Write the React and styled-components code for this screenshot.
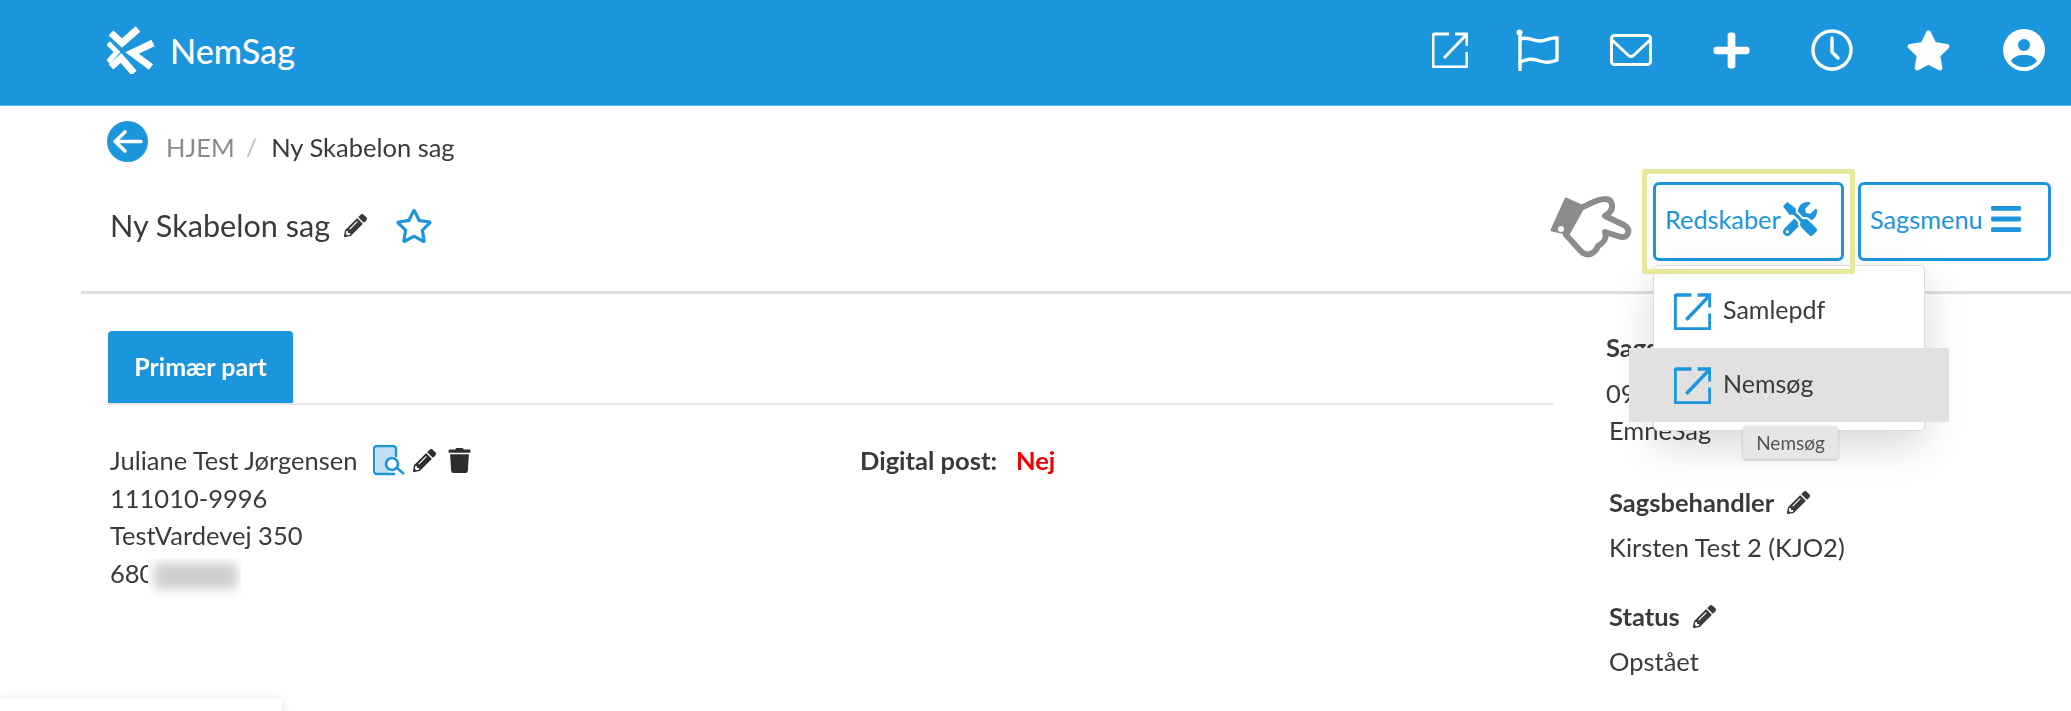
import React from 'react'
import styled, { createGlobalStyle } from 'styled-components'
import { FaPencilAlt, FaTrash, FaStar, FaRegStar, FaTools, FaBars, FaPlus } from 'react-icons/fa'

const BLUE = '#1b96dd'
const TEXT = '#3a3a3a'

const Global = createGlobalStyle`
  html, body { margin: 0; padding: 0; background: #fff; }
  body { font-family: Lato, "Noto Sans", sans-serif; color: ${TEXT}; overflow: hidden; }
`

const Page = styled.div`
  position: relative;
  width: 2071px;
  height: 711px;
  overflow: hidden;
  filter: blur(0.45px);
`

const TopBar = styled.header`
  height: 106px;
  box-sizing: border-box;
  background: ${BLUE};
  border-bottom: 1px solid #5db6ea;
  display: flex;
  align-items: center;
  justify-content: space-between;
  padding: 0 26px 5px 107px;
`

const Brand = styled.div`
  display: flex;
  align-items: center;
  gap: 15px;
  color: #fff;
  font-size: 34.2px;
  font-weight: 500;
`

const TopIcons = styled.nav`
  display: flex;
  align-items: center;
  color: #fff;
`

const TopIcon = styled.span`
  display: flex;
  margin-left: ${p => p.$gap || 0}px;
`

const Crumbs = styled.div`
  display: flex;
  align-items: center;
  padding: 14px 0 0 107px;
  height: 42px;
  font-size: 25.5px;
`

const BackBtn = styled.span`
  width: 41px;
  height: 41px;
  border-radius: 50%;
  background: ${BLUE};
  display: flex;
  margin-right: 18px;
`

const CrumbLink = styled.span`
  color: #8a8a8a;
  margin-top: 12px;
`

const CrumbSep = styled.span`
  color: #c4c4c4;
  margin: 12px 14px 0 11px;
`

const CrumbCurrent = styled.span`
  margin-top: 12px;
`

const TitleRow = styled.div`
  display: flex;
  justify-content: space-between;
  padding: 20px 20px 0 110px;
  height: 129px;
  box-sizing: border-box;
`

const TitleLeft = styled.div`
  display: flex;
  align-items: center;
  height: 79px;
  margin-top: 4px;
  font-size: 30.6px;
`

const PencilWrap = styled.span`
  display: inline-flex;
  color: ${TEXT};
  margin-left: ${p => p.$gap}px;
`

const StarWrap = styled.span`
  display: inline-flex;
  color: ${BLUE};
  margin-left: 28px;
`

const Actions = styled.div`
  display: flex;
  gap: 14px;
  position: relative;
`

const ActionBtn = styled.button`
  width: ${p => p.$w}px;
  height: 79px;
  box-sizing: border-box;
  border: 3px solid ${BLUE};
  border-radius: 6px;
  background: #fff;
  color: ${BLUE};
  font-family: inherit;
  font-size: 25.3px;
  display: flex;
  align-items: center;
  justify-content: space-between;
  padding: 0 ${p => p.$pr}px 6px 9px;
`

const Highlight = styled.div`
  position: absolute;
  left: -11px;
  top: -13px;
  width: 213px;
  height: 105px;
  box-sizing: border-box;
  border: 5px solid #e6e89c;
  border-radius: 3px;
  z-index: 4;
  pointer-events: none;
`

const Pointer = styled.span`
  position: absolute;
  left: -108px;
  top: 8px;
  display: flex;
`

const Rule = styled.div`
  height: 3px;
  background: #dedede;
  margin-left: 81px;
`

const Body = styled.main`
  display: grid;
  grid-template-columns: 1445px 1fr;
  column-gap: 56px;
  padding: 37px 0 0 108px;
`

const Tabs = styled.div`
  border-bottom: 2px solid #e6e6e6;
  height: 72px;
`

const Tab = styled.div`
  width: 185px;
  height: 72px;
  box-sizing: border-box;
  padding-bottom: 2px;
  background: ${BLUE};
  border-radius: 4px 4px 0 0;
  color: #fff;
  font-size: 25px;
  font-weight: 700;
  display: flex;
  align-items: center;
  justify-content: center;
`

const PartGrid = styled.div`
  display: grid;
  grid-template-columns: 750px 1fr;
  padding: 37px 0 0 2px;
  font-size: 25.5px;
  line-height: 37.5px;
`

const NameRow = styled.div`
  display: flex;
  align-items: center;
`

const PartIcon = styled.span`
  display: inline-flex;
  margin-left: ${p => p.$gap}px;
  color: #2d2d2d;
`

const PostalRow = styled.div`
  display: flex;
`

const Redacted = styled.span`
  display: block;
  position: relative;
  width: 93px;
  height: 40px;
  margin: 3px 0 0 -6px;
  background: #fff;
  overflow: hidden;

  &::before {
    content: '';
    position: absolute;
    left: 6px;
    right: 4px;
    top: 5px;
    height: 26px;
    background: #cdcdcd;
    filter: blur(6px);
  }
`

const Strong = styled.span`
  font-weight: 700;
`

const No = styled.span`
  font-weight: 700;
  color: #f00000;
  margin-left: 19px;
`

const Side = styled.aside`
  font-size: 25.5px;
  line-height: 37.5px;
  margin-top: -2px;
`

const SideBlock = styled.section`
  margin-bottom: ${p => p.$mb}px;
`

const SideLabel = styled.div`
  font-weight: 700;
  display: flex;
  align-items: center;
  gap: 13px;
  margin-bottom: 8px;
  margin-left: ${p => p.$shift || 0}px;
`

const SideValue = styled.div`
  margin-left: ${p => p.$shift || 0}px;
`

const Menu = styled.div`
  position: absolute;
  left: 0;
  top: 83px;
  width: 272px;
  height: 166px;
  box-sizing: border-box;
  padding: 8px 0;
  background: #fff;
  border: 1px solid #dcdcdc;
  border-radius: 5px;
  box-shadow: 0 14px 40px rgba(0, 0, 0, 0.16);
  z-index: 3;
`

const MenuItem = styled.div`
  height: 74px;
  box-sizing: border-box;
  margin: 0 -25px;
  padding-left: 45px;
  display: flex;
  align-items: center;
  gap: 12px;
  font-size: 25px;
  color: ${TEXT};
  background: ${p => (p.$active ? '#e1e1e1' : 'transparent')};

  span {
    margin-top: -4px;
  }
`

const Tooltip = styled.div`
  position: absolute;
  left: 89px;
  top: 160px;
  width: 95px;
  height: 33px;
  background: #e7e5e5;
  border-radius: 2px;
  box-shadow: 0 1px 3px rgba(0, 0, 0, 0.25);
  font-size: 19px;
  color: #555;
  display: flex;
  align-items: center;
  justify-content: center;
`

const Floating = styled.div`
  position: absolute;
  left: 0;
  bottom: -40px;
  width: 282px;
  height: 53px;
  background: #fff;
  box-shadow: 0 0 8px rgba(0, 0, 0, 0.12);
`

const Logo = () => (
  <svg width="48" height="48" viewBox="0 0 48 48" fill="none" stroke="#fff" strokeWidth="7">
    <path d="M4 7l11 10L31 3" />
    <path d="M46 17L25 27l19 14" />
    <path d="M4 41l10-9 13 15" />
    <path d="M1 17l9 9-9 10" strokeWidth="5" />
  </svg>
)

const BackArrow = () => (
  <svg width="41" height="41" viewBox="0 0 41 41" fill="none" stroke="#fff" strokeWidth="3.6" strokeLinecap="round" strokeLinejoin="round">
    <path d="M34 20.5H9M18 11L8 20.5 18 30" />
  </svg>
)

const LinkOut = ({ size, weight = 3, color = 'currentColor' }) => (
  <svg width={size} height={size} viewBox="0 0 36 36" fill="none" stroke={color} strokeWidth={weight}>
    <path d="M17 2H3a2 2 0 0 0-2 2v29a2 2 0 0 0 2 2h30a2 2 0 0 0 2-2V20" />
    <path d="M12 26L34 3M23 2h12v12" />
  </svg>
)

const FlagIcon = () => (
  <svg width="43" height="42" viewBox="0 0 43 42" fill="none" stroke="#fff" strokeWidth="3.4" strokeLinecap="round">
    <path d="M4 4v37" />
    <path d="M4 10c8-3 12 2 20 2 6 0 11-4 17-3v22c-6 3-11 3-17 1-8-3-13-2-20 1" />
    <circle cx="3.5" cy="3.5" r="3" fill="#fff" stroke="none" />
  </svg>
)

const MailIcon = () => (
  <svg width="42" height="32" viewBox="0 0 42 32" fill="none" stroke="#fff" strokeWidth="3" strokeLinejoin="round">
    <rect x="1.5" y="1.5" width="39" height="29" rx="3" />
    <path d="M2 6l16 15c2 2 4 2 6 0L40 6" />
  </svg>
)

const ClockIcon = () => (
  <svg width="42" height="42" viewBox="0 0 42 42" fill="none" stroke="#fff" strokeWidth="3.4" strokeLinecap="round" strokeLinejoin="round">
    <circle cx="21" cy="21" r="19" />
    <path d="M21 9v14l6 6" />
  </svg>
)

const UserIcon = () => (
  <svg width="42" height="42" viewBox="0 0 42 42">
    <circle cx="21" cy="21" r="21" fill="#fff" />
    <circle cx="21" cy="16" r="6" fill={BLUE} />
    <path d="M8 32c3-5 8-6 13-6s10 1 13 6c-3 4-8 6-13 6s-10-2-13-6z" fill={BLUE} />
  </svg>
)

const HandPointer = () => (
  <svg width="95" height="72" viewBox="0 0 95 72">
    <path
      d="M36 18C45 14 52 9 60 9c8 0 9 9 4 14l-4 3 19 9c7 4 5 13-3 12l-16-5c3 8-4 12-7 14-3 8-10 10-15 7-6-5-10-11-17-18z"
      fill="#fff"
      stroke="#8c8c8c"
      strokeWidth="6"
      strokeLinejoin="round"
    />
    <path d="M21 9l16 7-16 27-14-3z" fill="#8c8c8c" stroke="#8c8c8c" strokeWidth="3" strokeLinejoin="round" />
    <circle cx="16" cy="39" r="3" fill="#fff" />
  </svg>
)

const DocSearch = () => (
  <svg width="32" height="32" viewBox="0 0 32 32" fill="none">
    <path d="M3 2h19v9c-6 0-10 4-9 10l4 7H3z" fill="#bfe0f5" />
    <path d="M22 29H4a3 3 0 0 1-3-3V4a3 3 0 0 1 3-3h16a3 3 0 0 1 3 3v8" stroke={BLUE} strokeWidth="2.4" />
    <circle cx="19" cy="19" r="6" stroke={BLUE} strokeWidth="2.6" fill="#fff" />
    <path d="M24 23l7 6" stroke={BLUE} strokeWidth="2.4" />
  </svg>
)

const Pencil = ({ size = 23, gap = 0 }) => (
  <PencilWrap $gap={gap}><FaPencilAlt size={size} /></PencilWrap>
)

export default function App() {
  return (
    <Page>
      <Global />
      <TopBar>
        <Brand><Logo />NemSag</Brand>
        <TopIcons>
          <TopIcon><LinkOut size={36} /></TopIcon>
          <TopIcon $gap={48}><FlagIcon /></TopIcon>
          <TopIcon $gap={51}><MailIcon /></TopIcon>
          <TopIcon $gap={59}><FaPlus size={41} /></TopIcon>
          <TopIcon $gap={59}><ClockIcon /></TopIcon>
          <TopIcon $gap={53}><FaStar size={45} /></TopIcon>
          <TopIcon $gap={52}><UserIcon /></TopIcon>
        </TopIcons>
      </TopBar>

      <Crumbs>
        <BackBtn><BackArrow /></BackBtn>
        <CrumbLink>HJEM</CrumbLink>
        <CrumbSep>/</CrumbSep>
        <CrumbCurrent>Ny Skabelon sag</CrumbCurrent>
      </Crumbs>

      <TitleRow>
        <TitleLeft>
          Ny Skabelon sag
          <Pencil gap={14} />
          <StarWrap><FaRegStar size={38} /></StarWrap>
        </TitleLeft>
        <Actions>
          <Pointer><HandPointer /></Pointer>
          <ActionBtn $w={191} $pr={24}>Redskaber<FaTools size={34} /></ActionBtn>
          <ActionBtn $w={193} $pr={25}>Sagsmenu<FaBars size={34} /></ActionBtn>
          <Highlight />
          <Menu>
            <MenuItem><LinkOut size={37} weight={3.4} color={BLUE} /><span>Samlepdf</span></MenuItem>
            <MenuItem $active><LinkOut size={37} weight={3.4} color={BLUE} /><span>Nemsøg</span></MenuItem>
            <Tooltip>Nemsøg</Tooltip>
          </Menu>
        </Actions>
      </TitleRow>

      <Rule />

      <Body>
        <div>
          <Tabs><Tab>Primær part</Tab></Tabs>
          <PartGrid>
            <div>
              <NameRow>
                Juliane Test Jørgensen
                <PartIcon $gap={15}><DocSearch /></PartIcon>
                <PartIcon $gap={8}><FaPencilAlt size={23} /></PartIcon>
                <PartIcon $gap={11}><FaTrash size={25} /></PartIcon>
              </NameRow>
              <div>111010-9996</div>
              <div>TestVardevej 350</div>
              <PostalRow>680<Redacted /></PostalRow>
            </div>
            <div>
              <Strong>Digital post:</Strong>
              <No>Nej</No>
            </div>
          </PartGrid>
        </div>
        <Side>
          <SideBlock $mb={34}>
            <SideLabel $shift={-3}>Sagsemne</SideLabel>
            <SideValue $shift={-3}>09.02.18</SideValue>
            <SideValue>EmneSag</SideValue>
          </SideBlock>
          <SideBlock $mb={31}>
            <SideLabel>Sagsbehandler<Pencil /></SideLabel>
            <SideValue>Kirsten Test 2 (KJO2)</SideValue>
          </SideBlock>
          <SideBlock>
            <SideLabel>Status<Pencil /></SideLabel>
            <SideValue>Opstået</SideValue>
          </SideBlock>
        </Side>
      </Body>
      <Floating />
    </Page>
  )
}
